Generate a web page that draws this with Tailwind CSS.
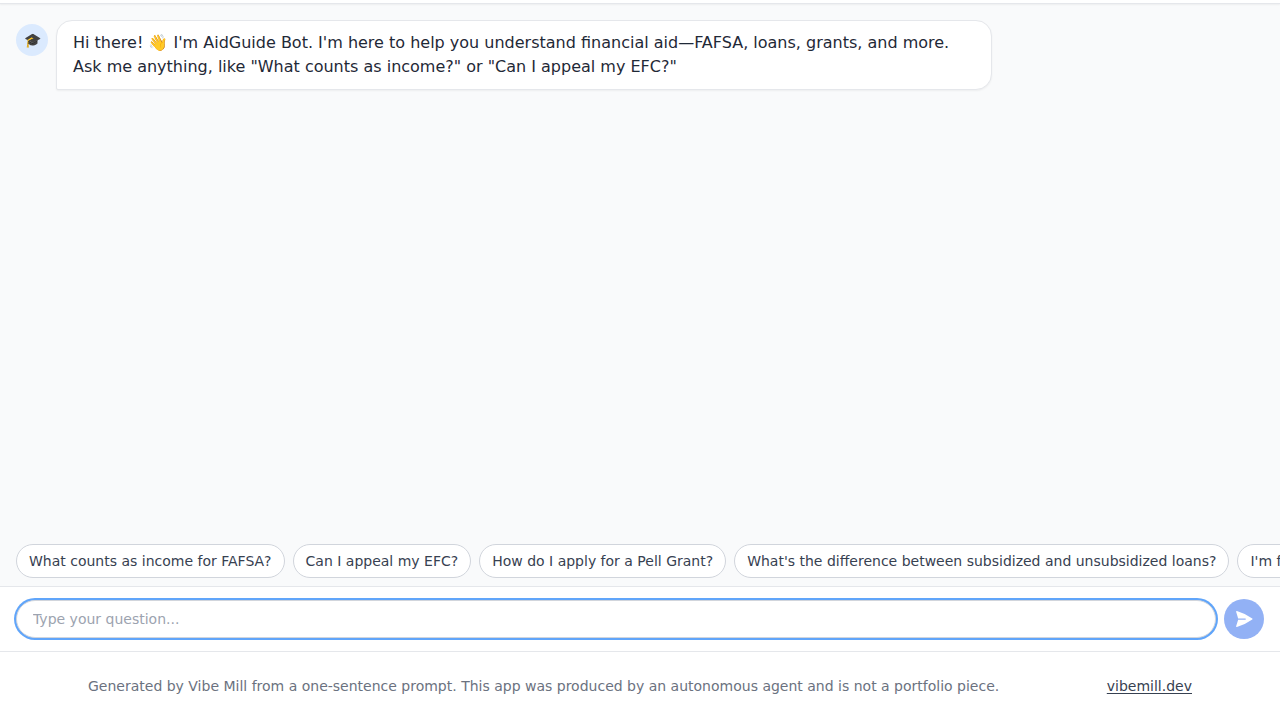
<!DOCTYPE html>
<html lang="en">
<head>
    <meta charset="UTF-8">
    <meta name="viewport" content="width=device-width, initial-scale=1.0">
    <title>AidGuide Bot</title>
    <script src="https://cdn.jsdelivr.net/npm/@tailwindcss/browser@4"></script>
</head>
<body class="bg-white font-['DejaVu_Sans',sans-serif] text-[#1f2937]">
    <div class="flex flex-col h-screen overflow-hidden">
        <header class="relative shrink-0 h-1 bg-white border-b border-gray-200 shadow-xs"></header>

        <main class="flex flex-col flex-1 min-h-0 bg-gray-50">
            <div class="flex-1 min-h-0 overflow-hidden p-4">
                <div class="flex items-start gap-2">
                    <div class="flex justify-center items-center shrink-0 size-8 mt-1 rounded-full bg-blue-100 text-sm">🎓</div>
                    <p class="max-w-3/4 px-4 py-2.5 bg-white border border-gray-200 rounded-2xl rounded-bl-xs shadow-xs">Hi there! 👋 I'm AidGuide Bot. I'm here to help you understand financial aid—FAFSA, loans, grants, and more. Ask me anything, like "What counts as income?" or "Can I appeal my EFC?"</p>
                </div>
            </div>
            <div class="flex gap-2 px-4 pb-2 overflow-x-auto [scrollbar-width:none] text-sm text-[#374151]">
                <button class="shrink-0 px-3 py-1.5 bg-white border border-gray-300 rounded-full whitespace-nowrap">What counts as income for FAFSA?</button>
                <button class="shrink-0 px-3 py-1.5 bg-white border border-gray-300 rounded-full whitespace-nowrap">Can I appeal my EFC?</button>
                <button class="shrink-0 px-3 py-1.5 bg-white border border-gray-300 rounded-full whitespace-nowrap">How do I apply for a Pell Grant?</button>
                <button class="shrink-0 px-3 py-1.5 bg-white border border-gray-300 rounded-full whitespace-nowrap">What's the difference between subsidized and unsubsidized loans?</button>
                <button class="shrink-0 px-3 py-1.5 bg-white border border-gray-300 rounded-full whitespace-nowrap">I'm filling out the FAFSA</button>
            </div>
        </main>

        <form class="flex items-center gap-2 px-4 py-3 bg-white border-t border-gray-200">
            <input type="text" aria-label="Your question" placeholder="Type your question..." class="flex-1 min-w-0 px-4 py-2 text-sm bg-white border border-gray-300 rounded-full ring-2 ring-[#60a5fa] outline-none placeholder:text-[#9ca3af]">
            <button type="button" aria-label="Send" class="flex justify-center items-center shrink-0 size-10 rounded-full bg-[#92b1f5] text-white">
                <svg class="size-5" viewBox="0 0 24 24" fill="currentColor"><path d="M3.478 2.405a.75.75 0 0 0-.926.94l2.432 7.905H13.5a.75.75 0 0 1 0 1.5H4.984l-2.432 7.905a.75.75 0 0 0 .926.94 60.519 60.519 0 0 0 18.445-8.986.75.75 0 0 0 0-1.218A60.517 60.517 0 0 0 3.478 2.405z"/></svg>
            </button>
        </form>

        <footer class="bg-white border-t border-gray-200 text-sm text-[#6b7280]">
            <div class="flex justify-between items-center max-w-6xl mx-auto px-6 py-6">
                <p>Generated by Vibe Mill from a one-sentence prompt. This app was produced by an autonomous agent and is not a portfolio piece.</p>
                <a href="https://vibemill.dev" class="text-[#374151] underline underline-offset-2">vibemill.dev</a>
            </div>
        </footer>
    </div>
</body>
</html>
